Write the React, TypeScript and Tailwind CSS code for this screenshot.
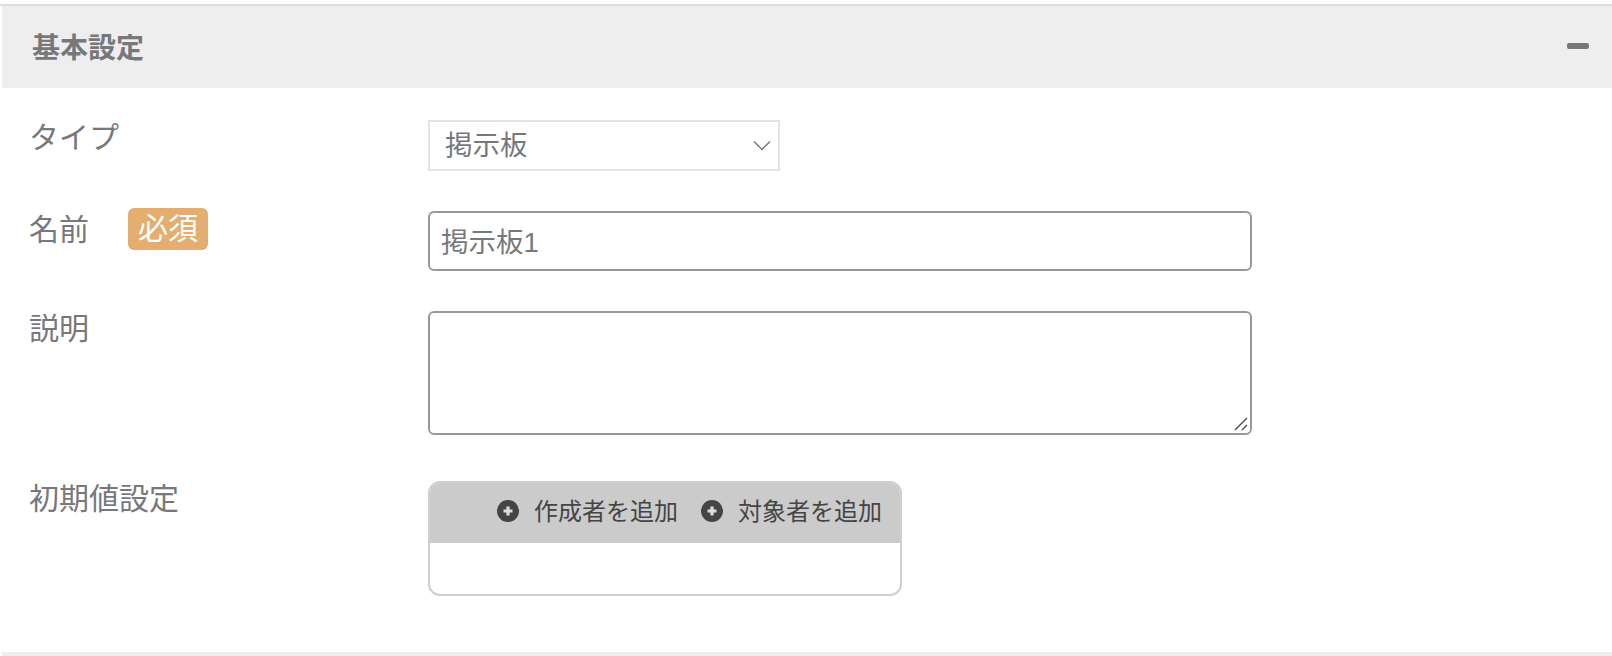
import React from "react";

const jp = { fontFamily: '"Liberation Sans", "Noto Sans CJK JP", sans-serif' };

function Plus() {
  return (
    <svg width="24" height="24" viewBox="0 0 24 24" className="shrink-0 -mt-[3px]">
      <circle cx="12" cy="12" r="11" fill="#444" />
      <path d="M7.5 12h9M12 7.5v9" stroke="#ddd" strokeWidth="3.2" />
    </svg>
  );
}

export default function App() {
  return (
    <div className="w-[1612px] h-[656px] bg-white overflow-hidden flex flex-col text-[#77787b]" style={jp}>
      <div className="h-[2px] mt-[4px] bg-[#dedede]" />
      <div className="h-[82px] ml-[2px] bg-[#eeeeee] flex items-center justify-between pl-[30px] pr-[23px]">
        <span className="text-[28px] font-bold pt-[4px]">基本設定</span>
        <span className="w-[22px] h-[6px] bg-[#77787b] rounded-[2px] -mt-[2px]" />
      </div>
      <div className="flex flex-col pl-[29px] flex-1">
        <div className="flex mt-[32px] h-[51px]">
          <div className="w-[399px] text-[30px] leading-[30px] mt-[3px]">タイプ</div>
          <div className="w-[352px] h-[51px] border-2 border-[#e3e3e3] flex items-center justify-between pl-[15px] pr-[7px] text-[27.5px]">
            <span className="pt-[1px]">掲示板</span>
            <svg width="18" height="11" viewBox="0 0 18 11"><path d="M1 1.5l8 8 8-8" fill="none" stroke="#77787b" strokeWidth="1.4" /></svg>
          </div>
        </div>
        <div className="flex mt-[40px] h-[60px]">
          <div className="w-[399px] flex items-start text-[30px] leading-[30px]">
            <span className="w-[99px] mt-[4px]">名前</span>
            <span className="bg-[#e3ae6f] text-white rounded-[6px] h-[42px] -mt-[3px] w-[80px] flex items-center justify-center">必須</span>
          </div>
          <div className="w-[824px] h-[60px] border-2 border-[#999] rounded-[6px] flex items-center pl-[11px] text-[27.5px]">
            <span className="pt-[4px]">掲示板1</span>
          </div>
        </div>
        <div className="flex mt-[40px] h-[124px]">
          <div className="w-[399px] text-[30px] leading-[30px] mt-[3px]">説明</div>
          <div className="relative w-[824px] h-[124px] border-2 border-[#999] rounded-[6px]">
            <svg width="16" height="16" viewBox="0 0 16 16" className="absolute right-[1px] bottom-[1px]">
              <path d="M2 14L14 2M9 14l5-5" stroke="#555" strokeWidth="1.5" />
            </svg>
          </div>
        </div>
        <div className="flex mt-[46px]">
          <div className="w-[399px] text-[30px] leading-[30px] mt-[3px]">初期値設定</div>
          <div className="w-[474px] h-[115px] border-2 border-[#cfcfcf] rounded-[12px] overflow-hidden">
            <div className="h-[62px] -mx-[2px] -mt-[2px] bg-[#cbcbcb] flex items-center justify-end gap-[22px] pr-[20px] text-[24px] text-[#444]">
              <span className="flex items-center gap-[14px]"><Plus />作成者を追加</span>
              <span className="flex items-center gap-[14px]"><Plus />対象者を追加</span>
            </div>
          </div>
        </div>
      </div>
      <div className="h-[4px] ml-[2px] bg-[#eeeeee]" />
    </div>
  );
}
